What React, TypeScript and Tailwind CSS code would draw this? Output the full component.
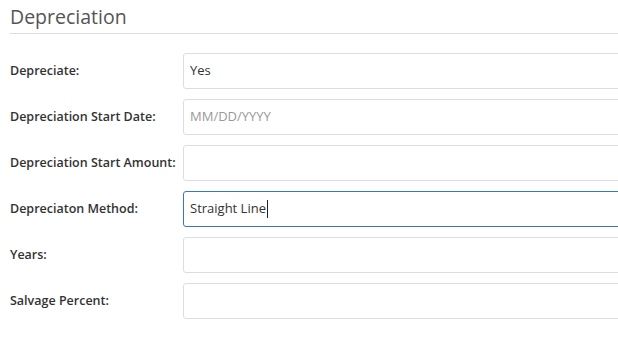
import React from 'react';

const rows = [
  { label: 'Depreciate:', value: 'Yes' },
  { label: 'Depreciation Start Date:', placeholder: 'MM/DD/YYYY' },
  { label: 'Depreciation Start Amount:' },
  { label: 'Depreciaton Method:', value: 'Straight Line', focused: true },
  { label: 'Years:' },
  { label: 'Salvage Percent:' },
];

export default function App() {
  return (
    <div className="h-[353px] w-[618px] overflow-hidden bg-white pl-[10px] text-[#333]" style={{ fontFamily: '"Open Sans", "Noto Sans", sans-serif' }}>
      <h2 className="mt-[4px] text-[19.5px] leading-[26px] text-[#555]">Depreciation</h2>
      <div className="mt-[3px] border-b border-[#ddd]" />
      <div className="mt-[19px] flex flex-col gap-[10px]">
        {rows.map((r, i) => (
          <div key={i} className="flex items-center">
            <label className="w-[173px] shrink-0 text-[12.5px] font-semibold text-[#333]">{r.label}</label>
            <div
              className={
                r.focused
                  ? 'flex h-[36px] w-[460px] shrink-0 items-center rounded-l-[3px] border border-[#337ab7] px-[6px] text-[13px]'
                  : 'flex h-[36px] w-[460px] shrink-0 items-center rounded-l-[3px] border border-[#ddd] px-[6px] text-[13px]'
              }
            >
              {r.value && <span className="text-[#333]">{r.value}</span>}
              {r.focused && <span className="ml-px h-[18px] w-px bg-[#222]" />}
              {r.placeholder && <span className="text-[#999]">{r.placeholder}</span>}
            </div>
          </div>
        ))}
      </div>
    </div>
  );
}
